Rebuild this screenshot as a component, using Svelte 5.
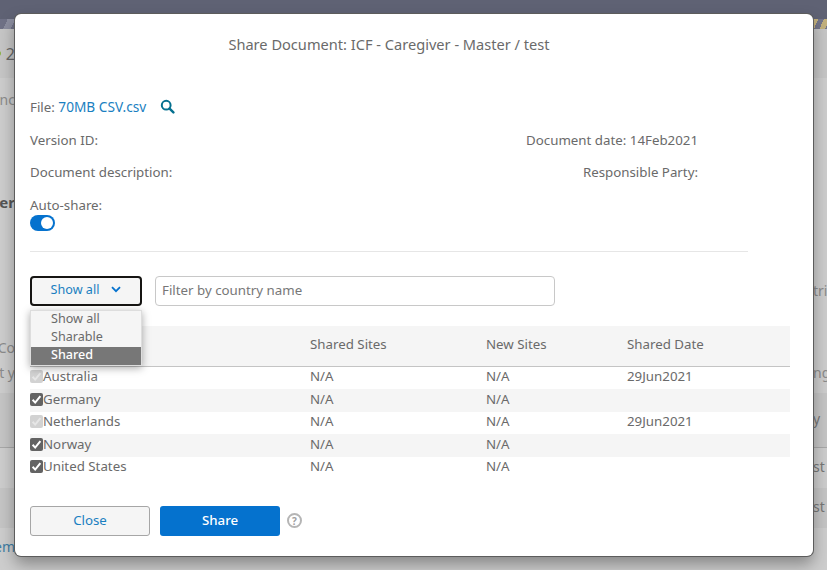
<script>
    // rows of the dimmed page that peek out on each side of the dialog
    const pageRows = [
        { h: 49, cls: 'head', left: '2', dot: true },
        { h: 42, left: 'anc' },
        { h: 66 },
        { h: 32, left: 'er', strong: true },
        { h: 54 },
        { h: 36, right: 'tri' },
        { h: 22 },
        { h: 34, left: 'Co' },
        { h: 16, left: 't y', right: 'ng' },
        { h: 13 },
        { h: 54, cls: 'band', right: 'y' },
        { h: 41, cls: 'ruled', right: 'st' },
        { h: 40, cls: 'band', right: 'st' },
        { h: 42, cls: 'tail', left: 'em', link: true }
    ];

    const countries = [
        { name: 'Australia', locked: true, sites: 'N/A', added: 'N/A', date: '29Jun2021' },
        { name: 'Germany', locked: false, sites: 'N/A', added: 'N/A', date: '' },
        { name: 'Netherlands', locked: true, sites: 'N/A', added: 'N/A', date: '29Jun2021' },
        { name: 'Norway', locked: false, sites: 'N/A', added: 'N/A', date: '' },
        { name: 'United States', locked: false, sites: 'N/A', added: 'N/A', date: '' }
    ];

    const filterOptions = ['Show all', 'Sharable', 'Shared'];
    let activeFilter = 'Shared';
</script>

<div class="page">
    <div class="topbar"></div>
    <div class="stripes">
        <div class="stripes-left"></div>
        <div class="stripes-right"></div>
    </div>
    {#each pageRows as row}
        <div class="page-row {row.cls || ''}" style="height: {row.h}px">
            <div class="peek-left" class:strong={row.strong} class:link={row.link}>
                {#if row.dot}<span class="dot"></span>{/if}
                <span>{row.left || ''}</span>
            </div>
            <div></div>
            <div class="peek-right">{row.right || ''}</div>
        </div>
    {/each}
</div>

<div class="dialog" role="dialog" aria-label="Share Document">
    <h1 class="title">Share Document: ICF - Caregiver - Master / test</h1>

    <div class="fields">
        <div class="field-row">
            <div>File: <a href="#top" class="file-link">70MB CSV.csv</a>
                <svg class="search" width="15" height="15" viewBox="0 0 15 15" aria-hidden="true">
                    <circle cx="6.2" cy="6.2" r="4.4" fill="none" stroke="#05708f" stroke-width="2"/>
                    <path d="M9.6 9.6 L13.4 13.4" stroke="#05708f" stroke-width="2.4" stroke-linecap="round"/>
                </svg>
            </div>
        </div>
        <div class="field-row">
            <div>Version ID:</div>
            <div>Document date: 14Feb2021</div>
        </div>
        <div class="field-row">
            <div>Document description:</div>
            <div>Responsible Party:</div>
        </div>
        <div class="field-row">
            <div>Auto-share:</div>
        </div>
    </div>
    <div class="toggle"><span class="knob"></span></div>

    <div class="divider"></div>

    <div class="filters">
        <button class="select-btn" type="button">
            Show all
            <svg width="10" height="7" viewBox="0 0 10 7" aria-hidden="true">
                <path d="M1 1.2 L5 5.2 L9 1.2" fill="none" stroke="#0572ce" stroke-width="1.8"/>
            </svg>
        </button>
        <input class="country-input" type="text" placeholder="Filter by country name" />
        <ul class="menu">
            {#each filterOptions as option}
                <li class:active={option === activeFilter}>{option}</li>
            {/each}
        </ul>
    </div>

    <table class="sites">
        <thead>
            <tr>
                <th class="col-country"></th>
                <th class="col-shared">Shared Sites</th>
                <th class="col-new">New Sites</th>
                <th>Shared Date</th>
            </tr>
        </thead>
        <tbody>
            {#each countries as country}
                <tr>
                    <td>
                        <div class="country">
                            <span class="check" class:locked={country.locked}>
                                <svg width="13" height="13" viewBox="0 0 13 13" aria-hidden="true">
                                    <path d="M2.6 6.8 L5.2 9.6 L10.4 3.2" fill="none" stroke={country.locked ? '#e6e6e6' : '#fff'} stroke-width="2"/>
                                </svg>
                            </span>
                            {country.name}
                        </div>
                    </td>
                    <td>{country.sites}</td>
                    <td>{country.added}</td>
                    <td>{country.date}</td>
                </tr>
            {/each}
        </tbody>
    </table>

    <div class="actions">
        <button class="btn btn-close" type="button">Close</button>
        <button class="btn btn-share" type="button">Share</button>
        <span class="help">?</span>
    </div>
</div>

<style>
    :global(body) {
        margin: 0;
        background: #cdcdcd;
        font-family: "Noto Sans", "Open Sans", sans-serif;
        font-size: 13.3px;
        color: #6a6a6a;
        overflow: hidden;
    }

    .page {
        height: 570px;
        overflow: hidden;
    }

    .topbar {
        height: 19px;
        background: #5f6274;
    }

    .stripes {
        display: flex;
        justify-content: space-between;
        height: 10px;
    }

    .stripes-left {
        width: 15px;
        background: repeating-linear-gradient(115deg, #6f7186 0 7px, #8b8d9f 7px 14px);
    }

    .stripes-right {
        width: 14px;
        background: repeating-linear-gradient(115deg, #c2b07c 0 5px, #73758a 5px 10px);
    }

    .page-row {
        display: grid;
        grid-template-columns: 15px 1fr 14px;
        align-items: center;
        box-sizing: border-box;
        font-size: 14px;
        color: #8b8b8b;
    }

    .page-row.head {
        background: #c6c6c6;
        color: #666;
        font-size: 16px;
    }

    .page-row.band {
        padding-bottom: 3px;
        background: #c5c5c5;
        color: #777;
    }

    .page-row.ruled {
        padding-bottom: 4px;
        border-top: 1px solid #a8a8a8;
        color: #777;
    }

    .page-row.tail {
        padding-bottom: 6px;
    }

    .peek-left {
        display: flex;
        align-items: center;
        justify-content: flex-end;
        white-space: nowrap;
        overflow: hidden;
    }

    .peek-left.strong {
        font-size: 15px;
        font-weight: 700;
        color: #555;
    }

    .peek-left.link {
        color: #3f7da3;
    }

    .dot {
        flex-shrink: 0;
        width: 5px;
        height: 5px;
        margin-right: 5px;
        border-radius: 50%;
        background: #8cb34a;
    }

    .peek-right {
        white-space: nowrap;
        overflow: hidden;
    }

    .dialog {
        position: absolute;
        left: 15px;
        top: 14px;
        box-sizing: border-box;
        width: 798px;
        height: 542px;
        padding: 21px 23px 0 15px;
        background: #fff;
        border-radius: 6px;
        box-shadow: 0 0 0 1px #5c5c5c, 0 8px 16px rgba(0, 0, 0, 0.35);
    }

    .title {
        width: 718px;
        margin: 0;
        font-size: 14.6px;
        font-weight: 400;
        line-height: 18px;
        text-align: center;
    }

    .fields {
        display: flex;
        flex-direction: column;
        gap: 12.5px;
        width: 668px;
        margin-top: 44px;
    }

    .field-row {
        display: flex;
        justify-content: space-between;
        line-height: 20px;
    }

    .file-link {
        color: #1a7fc1;
        font-size: 13.7px;
        text-decoration: none;
    }

    .search {
        margin-left: 10px;
        vertical-align: -2px;
    }

    .toggle {
        display: flex;
        justify-content: flex-end;
        align-items: center;
        box-sizing: border-box;
        width: 25px;
        height: 16px;
        padding-right: 2px;
        border-radius: 8px;
        background: #0572ce;
    }

    .knob {
        width: 12px;
        height: 12px;
        border-radius: 50%;
        background: #fff;
    }

    .divider {
        width: 718px;
        height: 1px;
        margin-top: 20px;
        background: #e6e6e6;
    }

    .filters {
        position: relative;
        display: flex;
        gap: 13px;
        margin-top: 24px;
    }

    .select-btn {
        display: flex;
        align-items: center;
        justify-content: center;
        gap: 12px;
        box-sizing: border-box;
        width: 112px;
        height: 30px;
        padding: 0 0 2px;
        border: 2px solid #161513;
        border-radius: 4px;
        background: #f5f5f5;
        color: #1a7fc1;
        font: inherit;
        font-size: 12.6px;
    }

    .country-input {
        box-sizing: border-box;
        width: 400px;
        height: 30px;
        padding: 0 6px 2px;
        border: 1px solid #c8c8c8;
        border-radius: 4px;
        color: #6a6a6a;
        font: inherit;
    }

    .country-input::placeholder {
        color: #777;
        opacity: 1;
    }

    .menu {
        position: absolute;
        left: 0;
        top: 34px;
        z-index: 2;
        box-sizing: border-box;
        width: 112px;
        margin: 0;
        padding: 0;
        list-style: none;
        background: #f5f5f5;
        border: 1px solid #ddd;
        box-shadow: 0 2px 8px rgba(0, 0, 0, 0.35);
        font-size: 12.6px;
    }

    .menu li {
        height: 18px;
        padding-left: 20px;
        line-height: 15px;
    }

    .menu li.active {
        background: #777;
        color: #fff;
        font-weight: 500;
    }

    .sites {
        width: 760px;
        margin-top: 20px;
        border-collapse: collapse;
        table-layout: fixed;
    }

    .sites th {
        height: 37px;
        padding: 0 0 3px;
        background: #f5f5f5;
        border-bottom: 1px solid #c4c4c4;
        font-weight: 400;
        text-align: left;
    }

    .col-country {
        width: 280px;
    }

    .col-shared {
        width: 176px;
    }

    .col-new {
        width: 141px;
    }

    .sites td {
        height: 20px;
        padding: 0 0 2.5px;
        line-height: 19px;
    }

    .sites tbody tr:nth-child(even) td {
        background: #f5f5f5;
    }

    .country {
        display: flex;
        align-items: center;
    }

    .check {
        display: flex;
        width: 13px;
        height: 13px;
        border-radius: 2px;
        background: #636363;
    }

    .check.locked {
        background: #d2d2d2;
    }

    .actions {
        display: flex;
        align-items: center;
        gap: 10px;
        margin-top: 26.5px;
    }

    .btn {
        box-sizing: border-box;
        width: 120px;
        height: 30px;
        padding: 0 0 2px;
        border-radius: 3px;
        font: inherit;
    }

    .btn-close {
        border: 1px solid #a6a6a6;
        background: #f5f5f5;
        color: #1a7fc1;
    }

    .btn-share {
        border: 0;
        background: #0572ce;
        color: #fff;
        font-weight: 500;
    }

    .help {
        display: flex;
        align-items: center;
        justify-content: center;
        box-sizing: border-box;
        width: 15px;
        height: 15px;
        margin-left: -3px;
        border: 2px solid #b5b5b5;
        border-radius: 50%;
        color: #a0a0a0;
        font-size: 10px;
        font-weight: 700;
    }
</style>
